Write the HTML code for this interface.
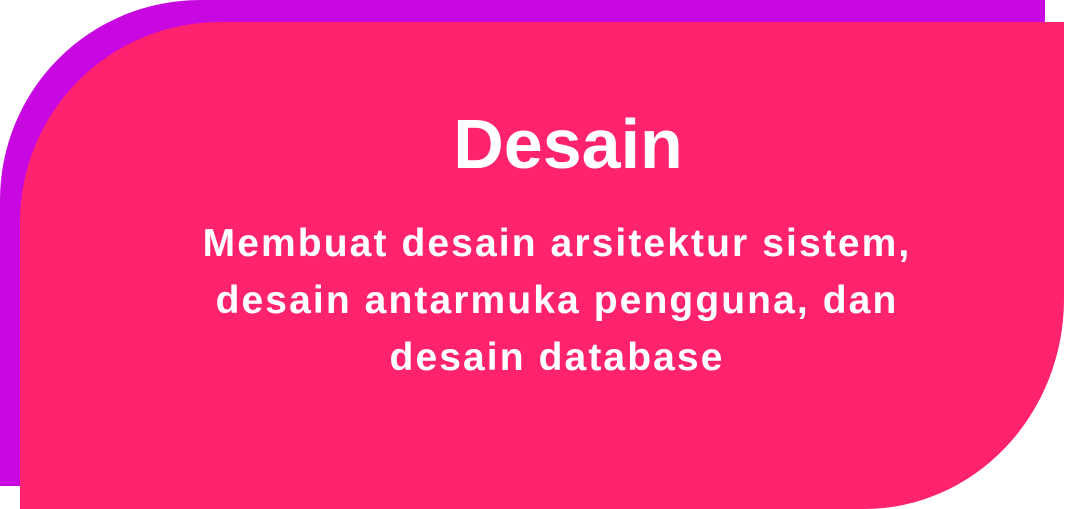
<!DOCTYPE html>
<html><head><style>
html,body{margin:0;padding:0;width:1065px;height:509px;overflow:hidden;background:#fff;font-family:"Liberation Sans",sans-serif;}
.p{position:absolute;left:0;top:0;width:1045px;height:486px;background:#c808e0;border-top-left-radius:200px;border-bottom-right-radius:260px;}
.k{position:absolute;left:20px;top:22px;width:1044px;height:487px;background:#ff226e;border-top-left-radius:200px 200px;border-bottom-right-radius:200px 210px;}
.t{position:absolute;left:268px;width:600px;text-align:center;color:#fff;font-weight:bold;font-size:70px;top:102px;line-height:84px;}
.b{position:absolute;left:157px;width:800px;text-align:center;color:#fff;font-weight:bold;font-size:39px;top:215px;line-height:57px;letter-spacing:2.1px;}
</style></head><body>
<div class="p"></div><div class="k"></div>
<div class="t">Desain</div>
<div class="b">Membuat desain arsitektur sistem,<br>desain antarmuka pengguna, dan<br>desain database</div>
</body></html>
